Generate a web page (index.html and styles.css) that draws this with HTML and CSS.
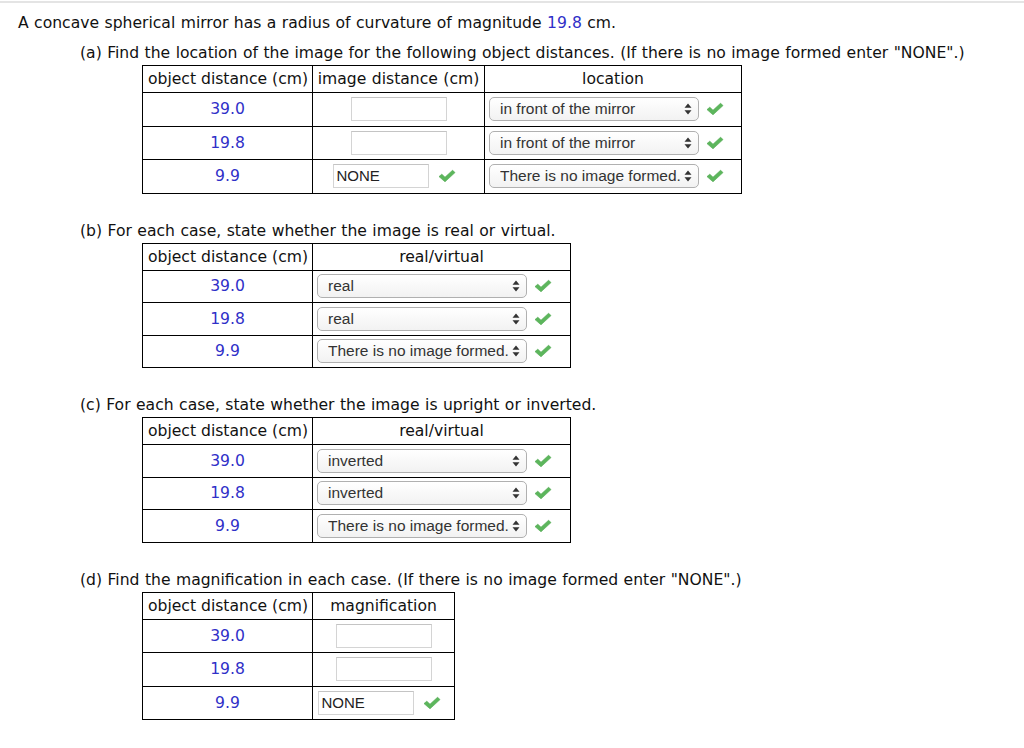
FILE: index.html
```html
<!DOCTYPE html>
<html>
<head>
<meta charset="utf-8">
<link rel="stylesheet" href="styles.css">
</head>
<body>
<div class="topline"></div>
<div class="page">
  <p class="intro">A concave spherical mirror has a radius of curvature of magnitude <span class="num">19.8</span> cm.</p>
  <section class="part">
    <p class="prompt first">(a) Find the location of the image for the following object distances. (If there is no image formed enter "NONE".)</p>
    <table class="grid">
      <tr>
        <th class="col-obj">object distance (cm)</th>
        <th class="col-img">image distance (cm)</th>
        <th class="col-loc">location</th>
      </tr>
      <tr>
        <td class="num">39.0</td>
        <td class="center"><span class="field"></span></td>
        <td class="left"><span class="select"><span class="select-text">in front of the mirror</span><svg class="arrows" viewBox="0 0 8 12" width="8" height="12"><path d="M4 0.5 L7.5 4.8 L0.5 4.8 Z M4 11.5 L7.5 7.2 L0.5 7.2 Z" fill="#333"/></svg></span><svg class="check" viewBox="0 0 18 14" width="18" height="14"><path d="M1 7.6 L3.8 5.2 L7 8.2 L14.6 1.2 L17 3.6 L7 12.8 Z" fill="#5cb65c" stroke="#4aa44a" stroke-width="0.6" stroke-linejoin="round"/></svg></td>
      </tr>
      <tr>
        <td class="num">19.8</td>
        <td class="center"><span class="field"></span></td>
        <td class="left"><span class="select"><span class="select-text">in front of the mirror</span><svg class="arrows" viewBox="0 0 8 12" width="8" height="12"><path d="M4 0.5 L7.5 4.8 L0.5 4.8 Z M4 11.5 L7.5 7.2 L0.5 7.2 Z" fill="#333"/></svg></span><svg class="check" viewBox="0 0 18 14" width="18" height="14"><path d="M1 7.6 L3.8 5.2 L7 8.2 L14.6 1.2 L17 3.6 L7 12.8 Z" fill="#5cb65c" stroke="#4aa44a" stroke-width="0.6" stroke-linejoin="round"/></svg></td>
      </tr>
      <tr>
        <td class="num">9.9</td>
        <td class="center"><span class="answer"><span class="field">NONE</span><svg class="check check-tail" viewBox="0 0 18 14" width="18" height="14"><path d="M1 7.6 L3.8 5.2 L7 8.2 L14.6 1.2 L17 3.6 L7 12.8 Z" fill="#5cb65c" stroke="#4aa44a" stroke-width="0.6" stroke-linejoin="round"/></svg></span></td>
        <td class="left"><span class="select"><span class="select-text">There is no image formed.</span><svg class="arrows" viewBox="0 0 8 12" width="8" height="12"><path d="M4 0.5 L7.5 4.8 L0.5 4.8 Z M4 11.5 L7.5 7.2 L0.5 7.2 Z" fill="#333"/></svg></span><svg class="check" viewBox="0 0 18 14" width="18" height="14"><path d="M1 7.6 L3.8 5.2 L7 8.2 L14.6 1.2 L17 3.6 L7 12.8 Z" fill="#5cb65c" stroke="#4aa44a" stroke-width="0.6" stroke-linejoin="round"/></svg></td>
      </tr>
    </table>

    <p class="prompt">(b) For each case, state whether the image is real or virtual.</p>
    <table class="grid grid-sel">
      <tr>
        <th class="col-obj">object distance (cm)</th>
        <th class="col-sel">real/virtual</th>
      </tr>
      <tr>
        <td class="num">39.0</td>
        <td class="left"><span class="select"><span class="select-text">real</span><svg class="arrows" viewBox="0 0 8 12" width="8" height="12"><path d="M4 0.5 L7.5 4.8 L0.5 4.8 Z M4 11.5 L7.5 7.2 L0.5 7.2 Z" fill="#333"/></svg></span><svg class="check" viewBox="0 0 18 14" width="18" height="14"><path d="M1 7.6 L3.8 5.2 L7 8.2 L14.6 1.2 L17 3.6 L7 12.8 Z" fill="#5cb65c" stroke="#4aa44a" stroke-width="0.6" stroke-linejoin="round"/></svg></td>
      </tr>
      <tr>
        <td class="num">19.8</td>
        <td class="left"><span class="select"><span class="select-text">real</span><svg class="arrows" viewBox="0 0 8 12" width="8" height="12"><path d="M4 0.5 L7.5 4.8 L0.5 4.8 Z M4 11.5 L7.5 7.2 L0.5 7.2 Z" fill="#333"/></svg></span><svg class="check" viewBox="0 0 18 14" width="18" height="14"><path d="M1 7.6 L3.8 5.2 L7 8.2 L14.6 1.2 L17 3.6 L7 12.8 Z" fill="#5cb65c" stroke="#4aa44a" stroke-width="0.6" stroke-linejoin="round"/></svg></td>
      </tr>
      <tr>
        <td class="num">9.9</td>
        <td class="left"><span class="select"><span class="select-text">There is no image formed.</span><svg class="arrows" viewBox="0 0 8 12" width="8" height="12"><path d="M4 0.5 L7.5 4.8 L0.5 4.8 Z M4 11.5 L7.5 7.2 L0.5 7.2 Z" fill="#333"/></svg></span><svg class="check" viewBox="0 0 18 14" width="18" height="14"><path d="M1 7.6 L3.8 5.2 L7 8.2 L14.6 1.2 L17 3.6 L7 12.8 Z" fill="#5cb65c" stroke="#4aa44a" stroke-width="0.6" stroke-linejoin="round"/></svg></td>
      </tr>
    </table>

    <p class="prompt">(c) For each case, state whether the image is upright or inverted.</p>
    <table class="grid grid-sel">
      <tr>
        <th class="col-obj">object distance (cm)</th>
        <th class="col-sel">real/virtual</th>
      </tr>
      <tr>
        <td class="num">39.0</td>
        <td class="left"><span class="select"><span class="select-text">inverted</span><svg class="arrows" viewBox="0 0 8 12" width="8" height="12"><path d="M4 0.5 L7.5 4.8 L0.5 4.8 Z M4 11.5 L7.5 7.2 L0.5 7.2 Z" fill="#333"/></svg></span><svg class="check" viewBox="0 0 18 14" width="18" height="14"><path d="M1 7.6 L3.8 5.2 L7 8.2 L14.6 1.2 L17 3.6 L7 12.8 Z" fill="#5cb65c" stroke="#4aa44a" stroke-width="0.6" stroke-linejoin="round"/></svg></td>
      </tr>
      <tr>
        <td class="num">19.8</td>
        <td class="left"><span class="select"><span class="select-text">inverted</span><svg class="arrows" viewBox="0 0 8 12" width="8" height="12"><path d="M4 0.5 L7.5 4.8 L0.5 4.8 Z M4 11.5 L7.5 7.2 L0.5 7.2 Z" fill="#333"/></svg></span><svg class="check" viewBox="0 0 18 14" width="18" height="14"><path d="M1 7.6 L3.8 5.2 L7 8.2 L14.6 1.2 L17 3.6 L7 12.8 Z" fill="#5cb65c" stroke="#4aa44a" stroke-width="0.6" stroke-linejoin="round"/></svg></td>
      </tr>
      <tr>
        <td class="num">9.9</td>
        <td class="left"><span class="select"><span class="select-text">There is no image formed.</span><svg class="arrows" viewBox="0 0 8 12" width="8" height="12"><path d="M4 0.5 L7.5 4.8 L0.5 4.8 Z M4 11.5 L7.5 7.2 L0.5 7.2 Z" fill="#333"/></svg></span><svg class="check" viewBox="0 0 18 14" width="18" height="14"><path d="M1 7.6 L3.8 5.2 L7 8.2 L14.6 1.2 L17 3.6 L7 12.8 Z" fill="#5cb65c" stroke="#4aa44a" stroke-width="0.6" stroke-linejoin="round"/></svg></td>
      </tr>
    </table>

    <p class="prompt">(d) Find the magnification in each case. (If there is no image formed enter "NONE".)</p>
    <table class="grid">
      <tr>
        <th class="col-obj">object distance (cm)</th>
        <th class="col-mag">magnification</th>
      </tr>
      <tr>
        <td class="num">39.0</td>
        <td class="center"><span class="field"></span></td>
      </tr>
      <tr>
        <td class="num">19.8</td>
        <td class="center"><span class="field"></span></td>
      </tr>
      <tr>
        <td class="num">9.9</td>
        <td class="center"><span class="answer"><span class="field">NONE</span><svg class="check check-tail" viewBox="0 0 18 14" width="18" height="14"><path d="M1 7.6 L3.8 5.2 L7 8.2 L14.6 1.2 L17 3.6 L7 12.8 Z" fill="#5cb65c" stroke="#4aa44a" stroke-width="0.6" stroke-linejoin="round"/></svg></span></td>
      </tr>
    </table>
  </section>
</div>
</body>
</html>
```

FILE: styles.css
```css
body {
  margin: 0;
  font-family: "DejaVu Sans", Verdana, sans-serif;
  font-size: 15.6px;
  word-spacing: 0.5px;
  color: #111;
  background: #fff;
}

.topline {
  height: 2px;
  margin-top: 1px;
  background: #e4e4e4;
}

.page {
  padding-left: 18px;
}

.intro {
  margin: 10px 0 0;
  line-height: 20px;
}

.num {
  color: #3030c8;
}

.part {
  margin-left: 62px;
}

.prompt {
  margin: 27px 0 2px;
  line-height: 20px;
}

.prompt.first {
  margin-top: 10px;
}

.grid {
  border-collapse: collapse;
  margin-left: 62px;
}

.grid th,
.grid td {
  border: 1px solid #000;
  padding: 0;
  font-weight: normal;
  vertical-align: middle;
}

.grid th {
  height: 26px;
  text-align: center;
  white-space: nowrap;
}

.grid td {
  height: 32.5px;
}

.grid-sel td {
  height: 31.5px;
}

.grid th.col-obj {
  width: 170px;
  text-align: left;
  padding-left: 5px;
  box-sizing: border-box;
  word-spacing: 0;
}

.col-img { width: 171px; }
.col-loc { width: 256px; }
.col-sel { width: 257px; }
.col-mag { width: 141px; }

.grid td.num {
  text-align: center;
}

.grid td.center {
  text-align: center;
}

.grid td.left {
  padding-left: 4px;
}

.field {
  display: inline-block;
  vertical-align: middle;
  box-sizing: border-box;
  width: 96px;
  height: 24px;
  border: 1px solid #d4d4d4;
  border-top-color: #c4c4c4;
  background: #fff;
  font-family: "Liberation Sans", Arial, sans-serif;
  font-size: 15px;
  word-spacing: 0;
  line-height: 22px;
  color: #222;
  text-align: left;
  padding-left: 3px;
}

.answer {
  display: inline-flex;
  align-items: center;
  vertical-align: middle;
}

.select {
  display: inline-flex;
  align-items: center;
  vertical-align: middle;
  box-sizing: border-box;
  width: 210px;
  height: 24px;
  padding: 0 6px 0 10px;
  border: 1px solid #b0b0b0;
  border-radius: 5px;
  background: linear-gradient(#ffffff, #f2f2f2);
  font-family: "Liberation Sans", Arial, sans-serif;
  font-size: 15.5px;
  word-spacing: 0;
  color: #333;
}

.select-text {
  flex: 1;
  white-space: nowrap;
  overflow: hidden;
}

.arrows {
  flex: none;
  margin-left: 2px;
}

.check {
  vertical-align: middle;
  margin-left: 7px;
}

.check-tail {
  margin-left: 9px;
  margin-right: 9px;
}
```
